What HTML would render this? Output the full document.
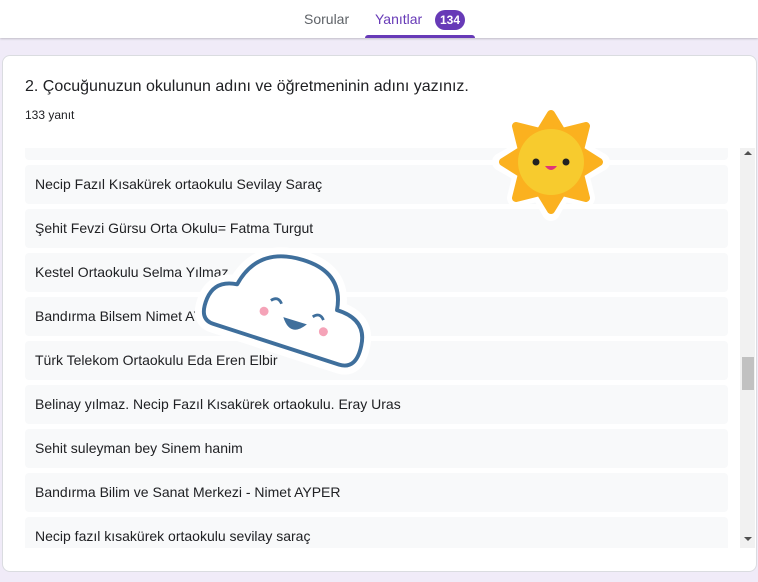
<html><head><style>
body{margin:0;width:758px;height:582px;background:#f0ebf8;font-family:"Liberation Sans",sans-serif;position:relative;overflow:hidden}
.nav{position:absolute;left:0;top:0;width:758px;height:38px;background:#fff;box-shadow:0 1px 2px rgba(0,0,0,.2)}
.tab{position:absolute;top:11px;font-size:14px}
.card{position:absolute;left:2px;top:55px;width:755px;height:517px;background:#fff;border-radius:8px;border:1px solid #dadce0;box-sizing:border-box}
.list{position:absolute;left:25px;top:148px;width:703px;height:400px;overflow:hidden}
.row{position:absolute;left:0;width:703px;height:39px;background:#f8f9fa;border-radius:4px;font-size:14px;color:#202124;line-height:39px;padding-left:10px;box-sizing:border-box}
</style></head><body>
<div class="nav">
<div class="tab" style="left:304px;color:#5f6368">Sorular</div>
<div class="tab" style="left:375px;color:#673ab7">Yanıtlar</div>
<div style="position:absolute;left:435px;top:10px;width:30px;height:20px;border-radius:10px;background:#673ab7;color:#fff;font-size:12px;font-weight:bold;text-align:center;line-height:20px">134</div>
<div style="position:absolute;left:365px;top:35px;width:110px;height:3px;background:#673ab7;border-radius:3px 3px 0 0"></div>
</div>
<div class="card">
<div style="position:absolute;left:22px;top:22px;font-size:16px;color:#202124">2. Çocuğunuzun okulunun adını ve öğretmeninin adını yazınız.</div>
<div style="position:absolute;left:22px;top:52px;font-size:12px;color:#202124">133 yanıt</div>
</div>
<div class="list">
<div class="row" style="top:-27px">…</div>
<div class="row" style="top:17px">Necip Fazıl Kısakürek ortaokulu Sevilay Saraç</div>
<div class="row" style="top:61px">Şehit Fevzi Gürsu Orta Okulu= Fatma Turgut</div>
<div class="row" style="top:105px">Kestel Ortaokulu Selma Yılmaz</div>
<div class="row" style="top:149px">Bandırma Bilsem Nimet AYPER</div>
<div class="row" style="top:193px">Türk Telekom Ortaokulu Eda Eren Elbir</div>
<div class="row" style="top:237px">Belinay yılmaz. Necip Fazıl Kısakürek ortaokulu. Eray Uras</div>
<div class="row" style="top:281px">Sehit suleyman bey Sinem hanim</div>
<div class="row" style="top:325px">Bandırma Bilim ve Sanat Merkezi - Nimet AYPER</div>
<div class="row" style="top:369px">Necip fazıl kısakürek ortaokulu sevilay saraç</div>
</div>
<div style="position:absolute;left:740px;top:148px;width:15px;height:400px;background:#f1f1f1"></div>
<div style="position:absolute;left:742px;top:357px;width:12px;height:33px;background:#c1c1c1"></div>
<div style="position:absolute;left:744px;top:151px;width:0;height:0;border:4px solid transparent;border-bottom-color:#505050;border-top:0"></div>
<div style="position:absolute;left:744px;top:537px;width:0;height:0;border:4px solid transparent;border-top-color:#505050;border-bottom:0"></div>
<svg style="position:absolute;left:0;top:0" width="758" height="582">
<g transform="translate(551,162)">
<polygon points="0,-50 11,-30 35,-36 29,-12 50,0 29,12 35,36 11,30 0,50 -11,30 -35,36 -29,12 -50,0 -29,-12 -35,-36 -11,-30" fill="#fff" stroke="#fff" stroke-width="18" stroke-linejoin="round"/>
<polygon points="0,-48 11,-30 35,-36 29,-12 48,0 29,12 35,36 11,30 0,48 -11,30 -35,36 -29,12 -48,0 -29,-12 -35,-36 -11,-30" fill="#fbb11f" stroke="#fbb11f" stroke-width="8" stroke-linejoin="round"/>
<circle r="33" fill="#f7cb2e"/>
<circle cx="-15" cy="0" r="3.5" fill="#222"/><circle cx="15" cy="0" r="3.5" fill="#222"/>
<path d="M-6 4 H6 Q0 12 -6 4Z" fill="#e0337a"/>
</g>
<g transform="translate(296,314) rotate(17) scale(1.12)">
<path d="M-68 30 Q-82 30 -80 10 Q-78 -8 -58 -10 Q-50 -48 -8 -48 Q30 -48 34 -14 Q62 -14 64 10 Q66 32 50 32 Z" fill="#fff" stroke="#fff" stroke-width="16" stroke-linejoin="round"/>
<path d="M-68 30 Q-82 30 -80 10 Q-78 -8 -58 -10 Q-50 -48 -8 -48 Q30 -48 34 -14 Q62 -14 64 10 Q66 32 50 32 Z" fill="#fff" stroke="#3f6f9c" stroke-width="3.5" stroke-linejoin="round"/>
<path d="M-25 -5 q5 -6 10 0 M15 -2 q5 -6 10 0" stroke="#3f6f9c" stroke-width="2.5" fill="none"/>
<path d="M-10 6 H12 Q1 22 -10 6Z" fill="#3f6f9c"/>
<circle cx="-28" cy="6" r="4" fill="#f5a3b8"/><circle cx="28" cy="8" r="4" fill="#f5a3b8"/>
</g>
</svg>
</body></html>
